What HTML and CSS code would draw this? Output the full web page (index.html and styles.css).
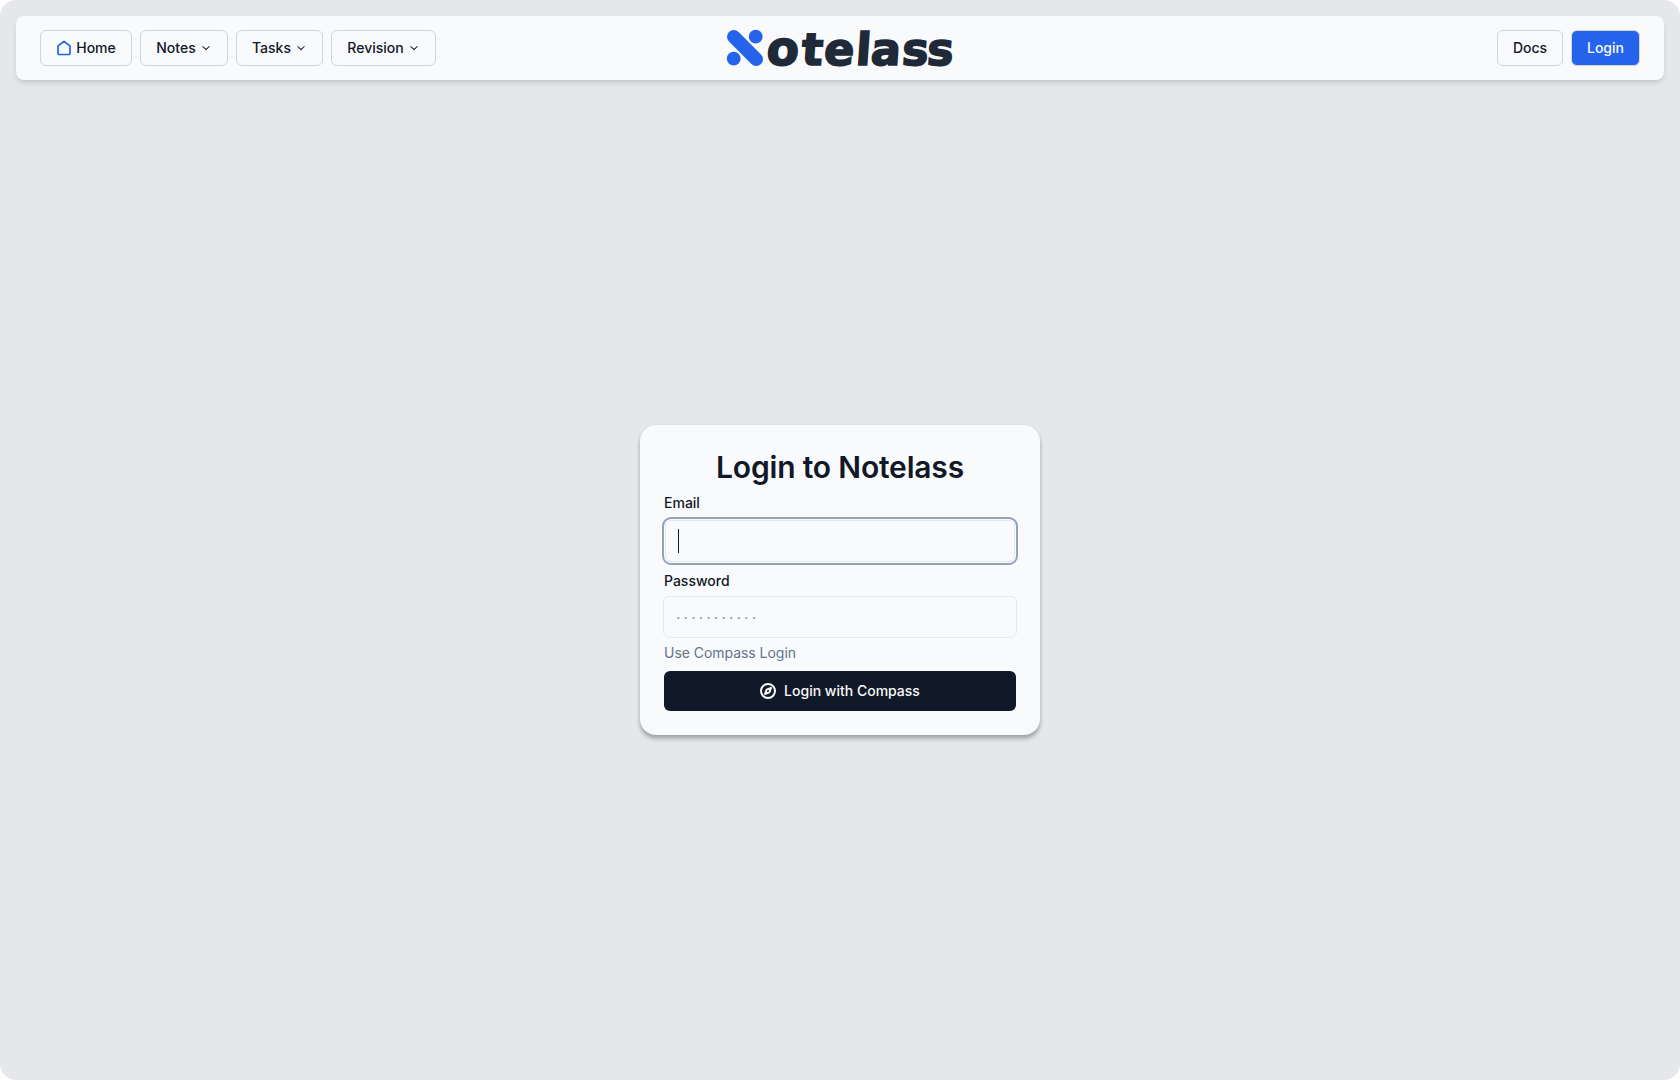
FILE: index.html
```html
<!DOCTYPE html>
<html lang="en">
<head>
<meta charset="utf-8">
<title>Notelass</title>
<link rel="stylesheet" href="styles.css">
</head>
<body>
<div class="app">
  <header class="navbar">
    <nav class="nav-group">
      <a class="btn btn-home"><svg class="icon-home" viewBox="0 0 16 16"><path d="M2 5.9 8 1.5l6 4.4v7.6a1 1 0 0 1-1 1H3a1 1 0 0 1-1-1Z"/></svg>Home</a>
      <a class="btn btn-notes">Notes<svg class="chevron" viewBox="0 0 12 12"><path d="m2.8 4.5 3.2 3.2 3.2-3.2"/></svg></a>
      <a class="btn btn-tasks">Tasks<svg class="chevron" viewBox="0 0 12 12"><path d="m2.8 4.5 3.2 3.2 3.2-3.2"/></svg></a>
      <a class="btn btn-revision">Revision<svg class="chevron" viewBox="0 0 12 12"><path d="m2.8 4.5 3.2 3.2 3.2-3.2"/></svg></a>
    </nav>
    <svg class="logo" viewBox="0 0 226 40" aria-label="Notelass">
      <g class="logo-mark">
        <path d="M6.8 8.8 29.2 31.2" />
        <circle cx="28.7" cy="8.7" r="6.9"/>
        <circle cx="6.7" cy="30.7" r="6.9"/>
      </g>
      <text class="logo-text" transform="translate(0 36.5) skewX(-4)" x="38.8 73.8 96.3 128 143 174.3 199.3" y="0"><tspan class="logo-o">o</tspan>telass</text>
    </svg>
    <nav class="nav-group">
      <a class="btn btn-docs">Docs</a>
      <a class="btn btn-login">Login</a>
    </nav>
  </header>
  <main class="stage">
    <section class="card">
      <h1 class="title">Login to Notelass</h1>
      <label class="label">Email</label>
      <div class="field field-focus"><div class="field-inner"><span class="caret"></span></div></div>
      <label class="label label-password">Password</label>
      <div class="field field-password"><span class="placeholder">···········</span></div>
      <a class="hint">Use Compass Login</a>
      <button class="submit"><svg class="compass" viewBox="0 0 16 16"><circle cx="8" cy="8" r="7"/><path d="m11 5-1.6 4.4L5 11l1.6-4.4Z"/></svg>Login with Compass</button>
    </section>
  </main>
</div>
</body>
</html>
```
FILE: styles.css
```css
* { box-sizing: border-box; }
body { margin: 0; background: #fff; font-family: Inter, sans-serif; color: #111827; }
.app { height: 1080px; padding: 16px; border-radius: 16px; background: #e5e7eb; display: flex; flex-direction: column; }
.navbar { height: 64px; flex: none; padding: 0 24px; border-radius: 8px; background: #f9fafc; display: grid; grid-template-columns: 1fr 226px 1fr; align-items: center; box-shadow: 0 4px 6px -1px rgba(0,0,0,.1), 0 2px 4px -2px rgba(0,0,0,.1); }
.nav-group { display: flex; gap: 8px; }
.nav-group:last-child { justify-content: flex-end; }
.btn { height: 36px; border: 1px solid #d1d5db; border-radius: 6px; display: flex; align-items: center; justify-content: center; font-size: 14px; font-weight: 500; line-height: 20px; }
.btn-home { width: 92px; gap: 4px; }
.btn-notes { width: 88px; }
.btn-tasks { width: 87px; }
.btn-revision { width: 105px; }
.btn-docs { width: 66px; }
.btn-login { width: 69px; background: #2563eb; color: #f9fafc; }
.icon-home { width: 16px; height: 16px; fill: none; stroke: #2563eb; stroke-width: 1.7; stroke-linejoin: round; }
.chevron { width: 12px; height: 12px; margin-left: 4px; fill: none; stroke: #111827; stroke-width: 1.05; stroke-linecap: round; stroke-linejoin: round; }
.logo { width: 226px; height: 40px; overflow: visible; }
.logo-mark { fill: #2563eb; }
.logo-mark path { stroke: #2563eb; stroke-width: 13.6; stroke-linecap: round; }
.logo-text { font: bold 44.5px "DejaVu Sans", sans-serif; fill: #1f2937; stroke: #1f2937; stroke-width: 1.7; }
.logo-o { font-size: 47px; }
.stage { flex: 1; display: flex; justify-content: center; align-items: flex-start; padding-top: 345px; }
.card { width: 400px; height: 310px; padding: 24px; border-radius: 16px; background: #f9fafc; display: flex; flex-direction: column; box-shadow: 0 4px 4px rgba(0,0,0,.25), 0 1px 3px rgba(0,0,0,.1); }
.title { margin: 0; font-size: 30px; font-weight: 600; line-height: 36px; letter-spacing: -.18px; text-align: center; }
.label { margin-top: 8px; font-size: 14px; font-weight: 500; line-height: 20px; }
.label-password { margin-top: 6px; }
.field { display: flex; flex: none; align-items: center; }
.field-focus { height: 48px; margin: 4px -2px 0; padding: 1px; border: 2px solid #94a3b8; border-radius: 9px; }
.field-inner { flex: 1; height: 42px; border: 1px solid #e5e7eb; border-radius: 6px; display: flex; align-items: center; padding-left: 12px; }
.caret { width: 1px; height: 24px; background: #111827; }
.field-password { height: 42px; margin: 5px -1px 0; border: 1px solid #e5e7eb; border-radius: 7px; padding-left: 12px; }
.placeholder { padding-top: 2px; font-size: 14px; line-height: 20px; letter-spacing: 3.1px; color: #94a3b8; font-weight: 600; }
.hint { margin-top: 5px; font-size: 14px; line-height: 20px; letter-spacing: -.04px; color: #64748b; }
.submit { height: 40px; margin-top: 8px; padding: 0; border: 0; border-radius: 6px; background: #111827; color: #f9fafc; display: flex; flex: none; align-items: center; justify-content: center; gap: 8px; font: 500 14px/20px Inter, sans-serif; }
.compass { width: 16px; height: 16px; fill: none; stroke: #f9fafc; stroke-width: 2; stroke-linejoin: round; }
```
